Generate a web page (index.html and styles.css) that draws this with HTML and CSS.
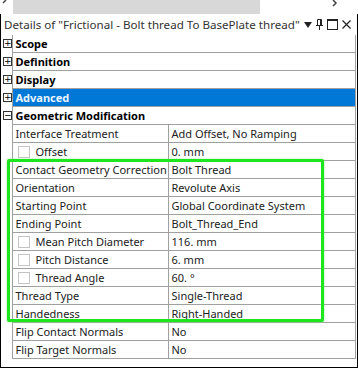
FILE: index.html
```html
<!DOCTYPE html>
<html lang="en">
<head>
    <meta charset="UTF-8">
    <title>Details</title>
    <link rel="stylesheet" href="styles.css">
</head>
<body>
    <div class="topbar">
        <svg class="arrow" width="6" height="6" viewBox="0 0 6 6"><path d="M5 0L2 3" stroke="#444" stroke-width="1.5" fill="none"/></svg>
        <div class="track"></div>
        <svg class="arrow right" width="6" height="7" viewBox="0 0 6 7"><path d="M1 0L4 3L1 6" stroke="#444" stroke-width="1.5" fill="none"/></svg>
    </div>
    <div class="panel">
        <div class="title">
            <span class="title-text">Details of "Frictional - Bolt thread To BasePlate thread"</span>
            <svg class="tool" width="8" height="6" viewBox="0 0 8 6"><path d="M0 0H8L4 6Z" fill="#222"/></svg>
            <svg class="tool" width="7" height="11" viewBox="0 0 7 11"><path d="M1.5 0.5H5.5V6.5H1.5ZM0 6.5H7M3.5 6.5V11M4.5 0.5V6.5" stroke="#222" fill="none"/></svg>
            <svg class="tool" width="11" height="11" viewBox="0 0 11 11"><rect x="0.5" y="0.5" width="10" height="10" stroke="#222" fill="none"/><path d="M0.5 1.5H10.5" stroke="#222"/></svg>
            <svg class="tool" width="9" height="9" viewBox="0 0 9 9"><path d="M0.5 0.5L8.5 8.5M8.5 0.5L0.5 8.5" stroke="#222" stroke-width="1.2" fill="none"/></svg>
        </div>
        <table class="grid">
            <colgroup><col class="c-exp"><col class="c-name"><col class="c-val"></colgroup>
            <tr class="cat"><td class="exp"><span class="box">+</span></td><td colspan="2">Scope</td></tr>
            <tr class="cat"><td class="exp"><span class="box">+</span></td><td colspan="2">Definition</td></tr>
            <tr class="cat"><td class="exp"><span class="box">+</span></td><td colspan="2">Display</td></tr>
            <tr class="cat sel"><td class="exp"><span class="box">+</span></td><td colspan="2">Advanced</td></tr>
            <tr class="cat"><td class="exp"><span class="box">&minus;</span></td><td colspan="2">Geometric Modification</td></tr>
            <tr><td class="exp"></td><td>Interface Treatment</td><td>Add Offset, No Ramping</td></tr>
            <tr><td class="exp"></td><td><span class="check"></span>Offset</td><td>0. mm</td></tr>
            <tr><td class="exp"></td><td>Contact Geometry Correction</td><td>Bolt Thread</td></tr>
            <tr><td class="exp"></td><td>Orientation</td><td>Revolute Axis</td></tr>
            <tr><td class="exp"></td><td>Starting Point</td><td>Global Coordinate System</td></tr>
            <tr><td class="exp"></td><td>Ending Point</td><td>Bolt_Thread_End</td></tr>
            <tr><td class="exp"></td><td><span class="check"></span>Mean Pitch Diameter</td><td>116. mm</td></tr>
            <tr><td class="exp"></td><td><span class="check"></span>Pitch Distance</td><td>6. mm</td></tr>
            <tr><td class="exp"></td><td><span class="check"></span>Thread Angle</td><td>60. &deg;</td></tr>
            <tr><td class="exp"></td><td>Thread Type</td><td>Single-Thread</td></tr>
            <tr><td class="exp"></td><td>Handedness</td><td>Right-Handed</td></tr>
            <tr><td class="exp"></td><td>Flip Contact Normals</td><td>No</td></tr>
            <tr><td class="exp"></td><td>Flip Target Normals</td><td>No</td></tr>
        </table>
        <div class="highlight"></div>
    </div>
</body>
</html>
```

FILE: styles.css
```css
body {
    margin: 0;
    width: 358px;
    height: 370px;
    overflow: hidden;
    background: #fff;
    font-family: "Noto Sans", sans-serif;
    font-size: 11px;
    color: #222;
}
.topbar {
    height: 14px;
    display: flex;
    align-items: flex-start;
    overflow: hidden;
}
.track {
    width: 247px;
    height: 14px;
    margin-left: 6px;
    background: #d8d8d8;
}
.arrow { margin-left: 1px; flex: none; }
.arrow.right { margin-left: 72px; }
.panel {
    position: relative;
    border: 1px solid #000;
    border-top: none;
    height: 353px;
    width: 356px;
}
.title {
    height: 21px;
    display: flex;
    align-items: center;
    padding-left: 3px;
    font-size: 11.6px;
    color: #333;
    white-space: nowrap;
}
.title-text { margin-right: 0; }
.tool { margin-left: 4px; flex: none; }
.grid {
    border-collapse: collapse;
    table-layout: fixed;
    width: 355px;
}
.c-exp { width: 11px; }
.c-name { width: 156px; }
.grid td {
    height: 17px;
    padding: 0 0 0 3px;
    border: 1px solid #a0a0a0;
    white-space: nowrap;
    overflow: hidden;
    line-height: 17px;
}
.grid td.exp {
    padding: 0;
    border-left: none;
    border-top: none;
    border-bottom: none;
}
.grid tr:first-child td { border-top: none; }
.cat td { font-weight: bold; color: #000; }
.sel td:not(.exp) { background: #0078d7; color: #e8f4ff; }
.box {
    display: block;
    width: 7px;
    height: 7px;
    margin-left: 2px;
    border: 1px solid #333;
    font-size: 9px;
    line-height: 7px;
    text-align: center;
    font-weight: normal;
    color: #000;
    font-family: "DejaVu Sans", sans-serif;
}
.check {
    display: inline-block;
    width: 10px;
    height: 10px;
    border: 1px solid #c4c4c4;
    vertical-align: -2px;
    margin: 0 6px 0 2px;
}
.highlight {
    position: absolute;
    left: 6px;
    top: 145px;
    width: 311px;
    height: 157px;
    border: 3px solid #1ee61e;
    border-radius: 2px;
    box-shadow: 0 0 2px #7af07a;
}
```
